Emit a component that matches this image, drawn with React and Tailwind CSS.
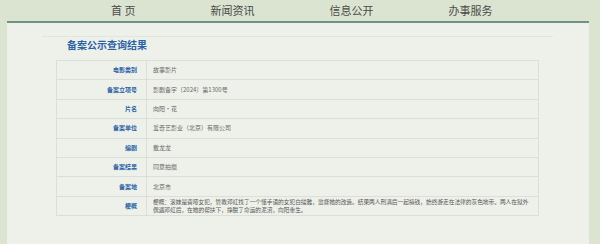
import React from "react";

const rows = [
  ["电影类别", "故事影片"],
  ["备案立项号", "影剧备字〔2024〕第1300号"],
  ["片名", "向阳·花"],
  ["备案单位", "爱奇艺影业（北京）有限公司"],
  ["编剧", "戴龙龙"],
  ["备案结果", "同意拍摄"],
  ["备案地", "北京市"],
];

export default function App() {
  const font = { fontFamily: '"Noto Sans CJK SC", "Noto Sans", sans-serif' };
  return (
    <div
      className="w-[600px] h-[244px] bg-[#dbe4d1] flex flex-col overflow-hidden"
      style={font}
    >
      <div className="h-[21px] flex items-center pl-[111px] gap-[75px] text-[11px] text-[#4a4a4a] leading-none">
        <span>首 页</span>
        <span>新闻资讯</span>
        <span>信息公开</span>
        <span>办事服务</span>
      </div>
      <div className="ml-[7px] w-[582px] flex-1 border-t-2 border-[#6e9382] bg-[#eef1ea] flex flex-col">
        <div className="mt-[13px] ml-[35px] w-[511px] h-px bg-[#e1e5dc]" />
        <div className="ml-[60px] mt-[2px] h-[12px] flex items-center text-[10px] font-bold text-[#2b62a6] leading-none">
          备案公示查询结果
        </div>
        <div className="ml-[49px] mt-[9px] w-[483px] border border-[#dcdfd7] flex flex-col">
          {rows.map(([k, v], i) => (
            <div
              key={i}
              className="h-[19.4px] flex border-b border-[#dcdfd7]"
            >
              <div className="w-[90px] shrink-0 border-r border-[#dcdfd7] flex items-center justify-end pr-[9px] text-[6px] font-bold text-[#2b62a6] leading-none">
                {k}
              </div>
              <div className="flex-1 flex items-center pl-[6px] text-[6px] text-[#666] leading-none">
                {v}
              </div>
            </div>
          ))}
          <div className="h-[18.5px] flex">
            <div className="w-[90px] shrink-0 border-r border-[#dcdfd7] flex items-center justify-end pr-[9px] text-[6px] font-bold text-[#2b62a6] leading-none">
              梗概
            </div>
            <div className="flex-1 flex flex-col justify-center pl-[6px] text-[5.7px] text-[#555] leading-[7.6px] whitespace-nowrap">
              <span>梗概：滚妹是聋哑女犯，管教邓虹找了一个懂手语的女犯白描雅，监督她的改造。结果两人刑满后一起搞钱，始终游走在法律的灰色地带。两人在狱外</span>
              <span>偶遇邓虹后，在她的帮扶下，挣脱了命运的泥沼，向阳重生。</span>
            </div>
          </div>
        </div>
      </div>
    </div>
  );
}
